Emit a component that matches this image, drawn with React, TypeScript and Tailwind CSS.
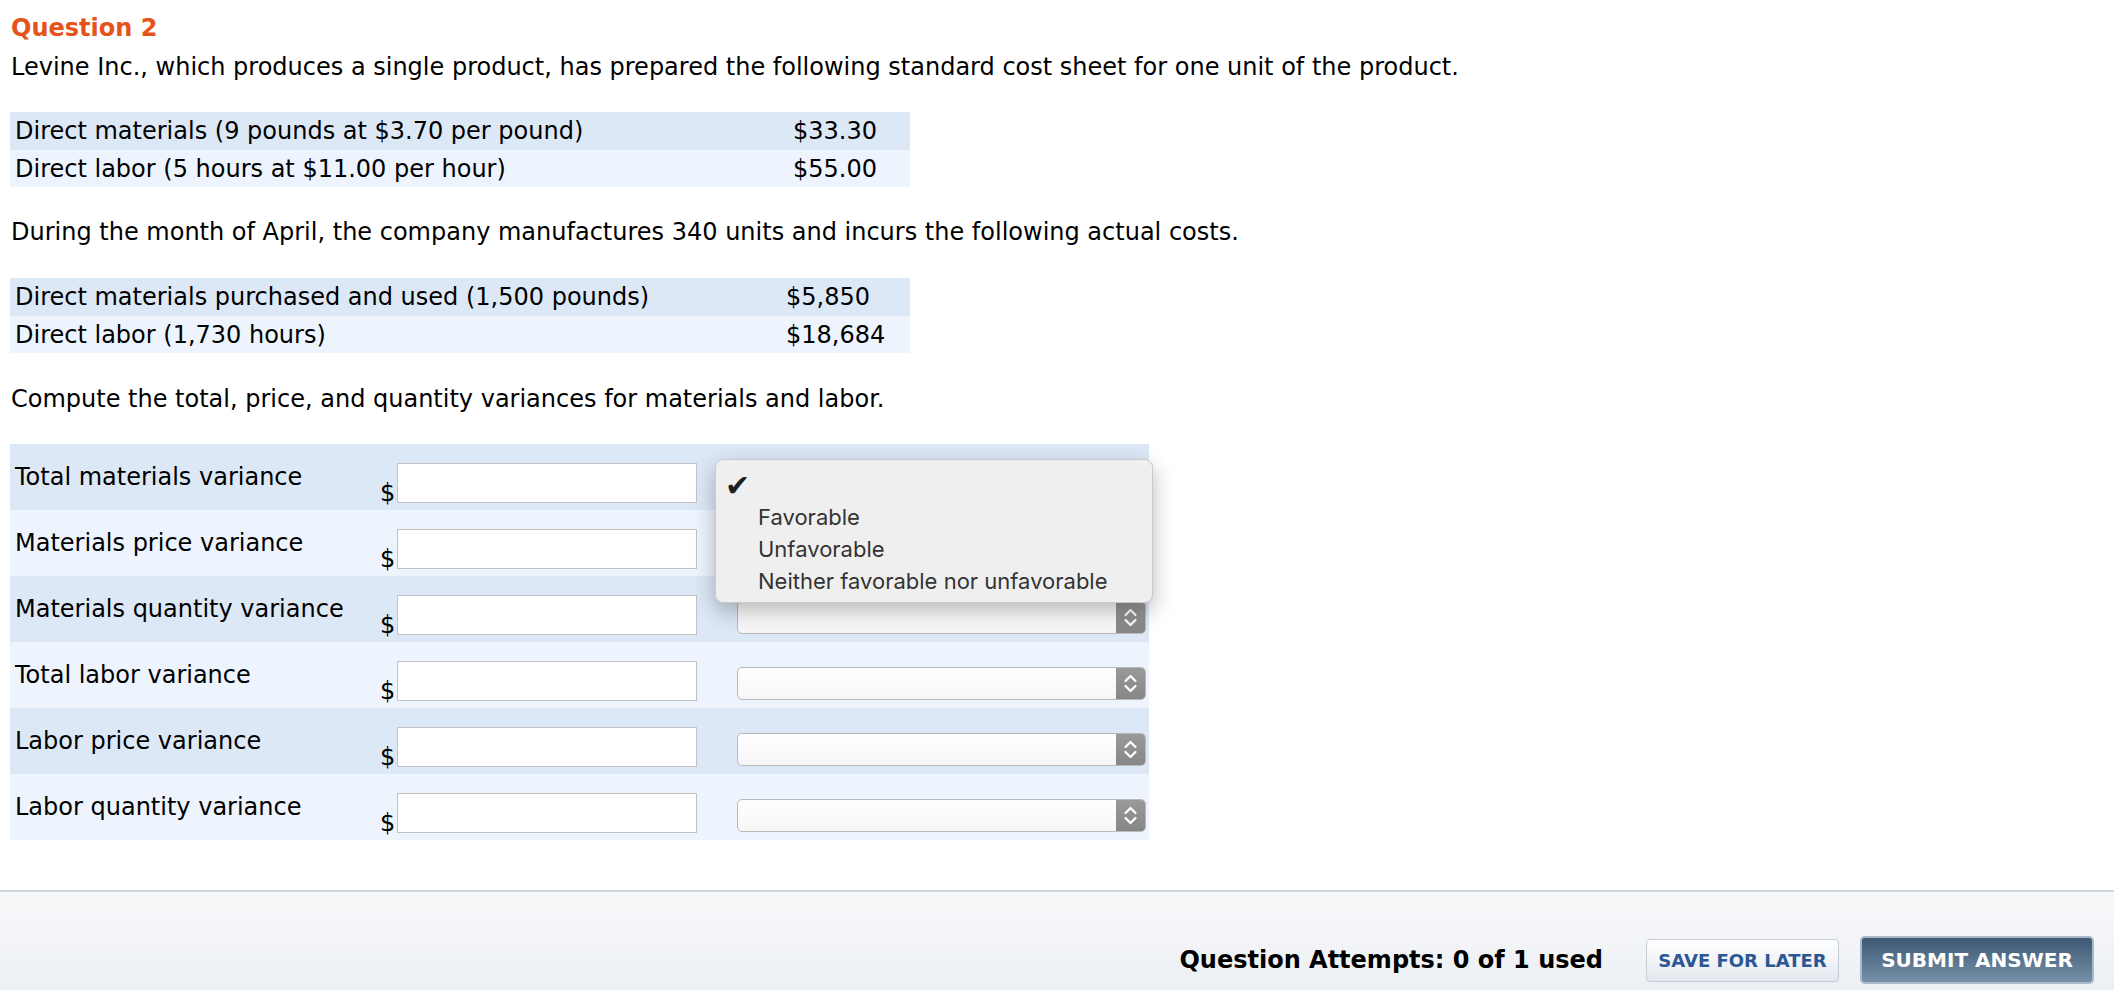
import React from "react";

const Chevrons = () => (
  <svg width="29" height="33" viewBox="0 0 29 33" fill="none">
    <polyline points="9.5,14 14.5,9 19.5,14" stroke="white" strokeWidth="2.2" strokeLinecap="round" strokeLinejoin="round" />
    <polyline points="9.5,19 14.5,24 19.5,19" stroke="white" strokeWidth="2.2" strokeLinecap="round" strokeLinejoin="round" />
  </svg>
);

const SelectBox = () => (
  <div className="mb-[8px] ml-[40px] flex h-[33px] w-[409px] justify-end overflow-hidden rounded-[5px] border border-[#b9b9b9] bg-gradient-to-b from-white to-[#f6f6f6]">
    <div className="flex h-full w-[29px] items-center justify-center bg-gradient-to-b from-[#9a9a9a] to-[#868686]">
      <Chevrons />
    </div>
  </div>
);

const rows = [
  "Total materials variance",
  "Materials price variance",
  "Materials quantity variance",
  "Total labor variance",
  "Labor price variance",
  "Labor quantity variance",
];

export default function App() {
  return (
    <div className="flex min-h-[990px] flex-col bg-white font-['DejaVu_Sans',Verdana,sans-serif] text-[24px] text-black">
      <div className="flex-1 px-[10px]">
        <h2 className="pl-px pt-[14px] text-[24px] font-bold leading-[28px] text-[#e4531b]">Question 2</h2>
        <p className="mt-[11px] pl-px leading-[28px]">
          Levine Inc., which produces a single product, has prepared the following standard cost sheet for one unit of the product.
        </p>

        <div className="mt-[31px] w-[900px]">
          <div className="flex h-[38px] items-center bg-[#dde8f7] leading-[28px]">
            <div className="w-[778px] pl-[5px]">Direct materials (9 pounds at $3.70 per pound)</div>
            <div className="pl-[5px]">$33.30</div>
          </div>
          <div className="flex h-[37px] items-center bg-[#edf4fd] leading-[28px]">
            <div className="w-[778px] pl-[5px]">Direct labor (5 hours at $11.00 per hour)</div>
            <div className="pl-[5px]">$55.00</div>
          </div>
        </div>

        <p className="mt-[31px] pl-px leading-[28px]">
          During the month of April, the company manufactures 340 units and incurs the following actual costs.
        </p>

        <div className="mt-[32px] w-[900px]">
          <div className="flex h-[38px] items-center bg-[#dde8f7] leading-[28px]">
            <div className="w-[771px] pl-[5px]">Direct materials purchased and used (1,500 pounds)</div>
            <div className="pl-[5px]">$5,850</div>
          </div>
          <div className="flex h-[37px] items-center bg-[#edf4fd] leading-[28px]">
            <div className="w-[771px] pl-[5px]">Direct labor (1,730 hours)</div>
            <div className="pl-[5px]">$18,684</div>
          </div>
        </div>

        <p className="mt-[32px] pl-px leading-[28px]">
          Compute the total, price, and quantity variances for materials and labor.
        </p>

        <div className="relative mt-[31px] w-[1139px]">
          {rows.map((label, i) => (
            <div
              key={label}
              className={`flex h-[66px] ${i % 2 === 0 ? "bg-[#dde8f7]" : "bg-[#edf4fd]"}`}
            >
              <div className="flex w-[370px] items-center pl-[5px] leading-[28px]">{label}</div>
              <div className="flex items-end pb-[7px]">
                <span className="mb-[-4px] leading-[28px]">$</span>
                <div className="ml-[2px] h-[40px] w-[300px] border border-[#c2c2c2] bg-white" />
              </div>
              <div className="flex items-end">
                <SelectBox />
              </div>
            </div>
          ))}

          <div className="absolute left-[705px] top-[15px] h-[144px] w-[438px] rounded-[8px] border border-[#cacaca] bg-[#efefef] pt-[9px] font-['Inter',sans-serif] text-[22px] leading-[32px] text-[#333] shadow-[0_8px_22px_rgba(0,0,0,0.28)]">
            <div className="h-[32px] pl-[9px] font-['DejaVu_Sans',sans-serif] text-[30px] leading-[34px] text-[#1f1f1f]">✔</div>
            <div className="pl-[42px]">Favorable</div>
            <div className="pl-[42px]">Unfavorable</div>
            <div className="pl-[42px]">Neither favorable nor unfavorable</div>
          </div>
        </div>
      </div>

      <footer className="flex h-[100px] items-center justify-end border-t-2 border-[#cfd5de] bg-gradient-to-b from-[#f7f8fa] to-[#edf0f3] pr-[20px] pt-[38px]">
        <div className="text-[24px] font-bold">Question Attempts: 0 of 1 used</div>
        <button className="ml-[43px] flex h-[43px] w-[193px] items-center justify-center rounded-[4px] border border-[#c3ccd7] bg-gradient-to-b from-white to-[#e4e8ee] text-[18px] font-bold text-[#2b5797]">
          SAVE FOR LATER
        </button>
        <button className="ml-[21px] flex h-[48px] w-[234px] items-center justify-center rounded-[5px] border-2 border-[#a9b9c9] bg-gradient-to-b from-[#3d5873] to-[#7891a9] text-[20px] font-bold text-white">
          SUBMIT ANSWER
        </button>
      </footer>
    </div>
  );
}
